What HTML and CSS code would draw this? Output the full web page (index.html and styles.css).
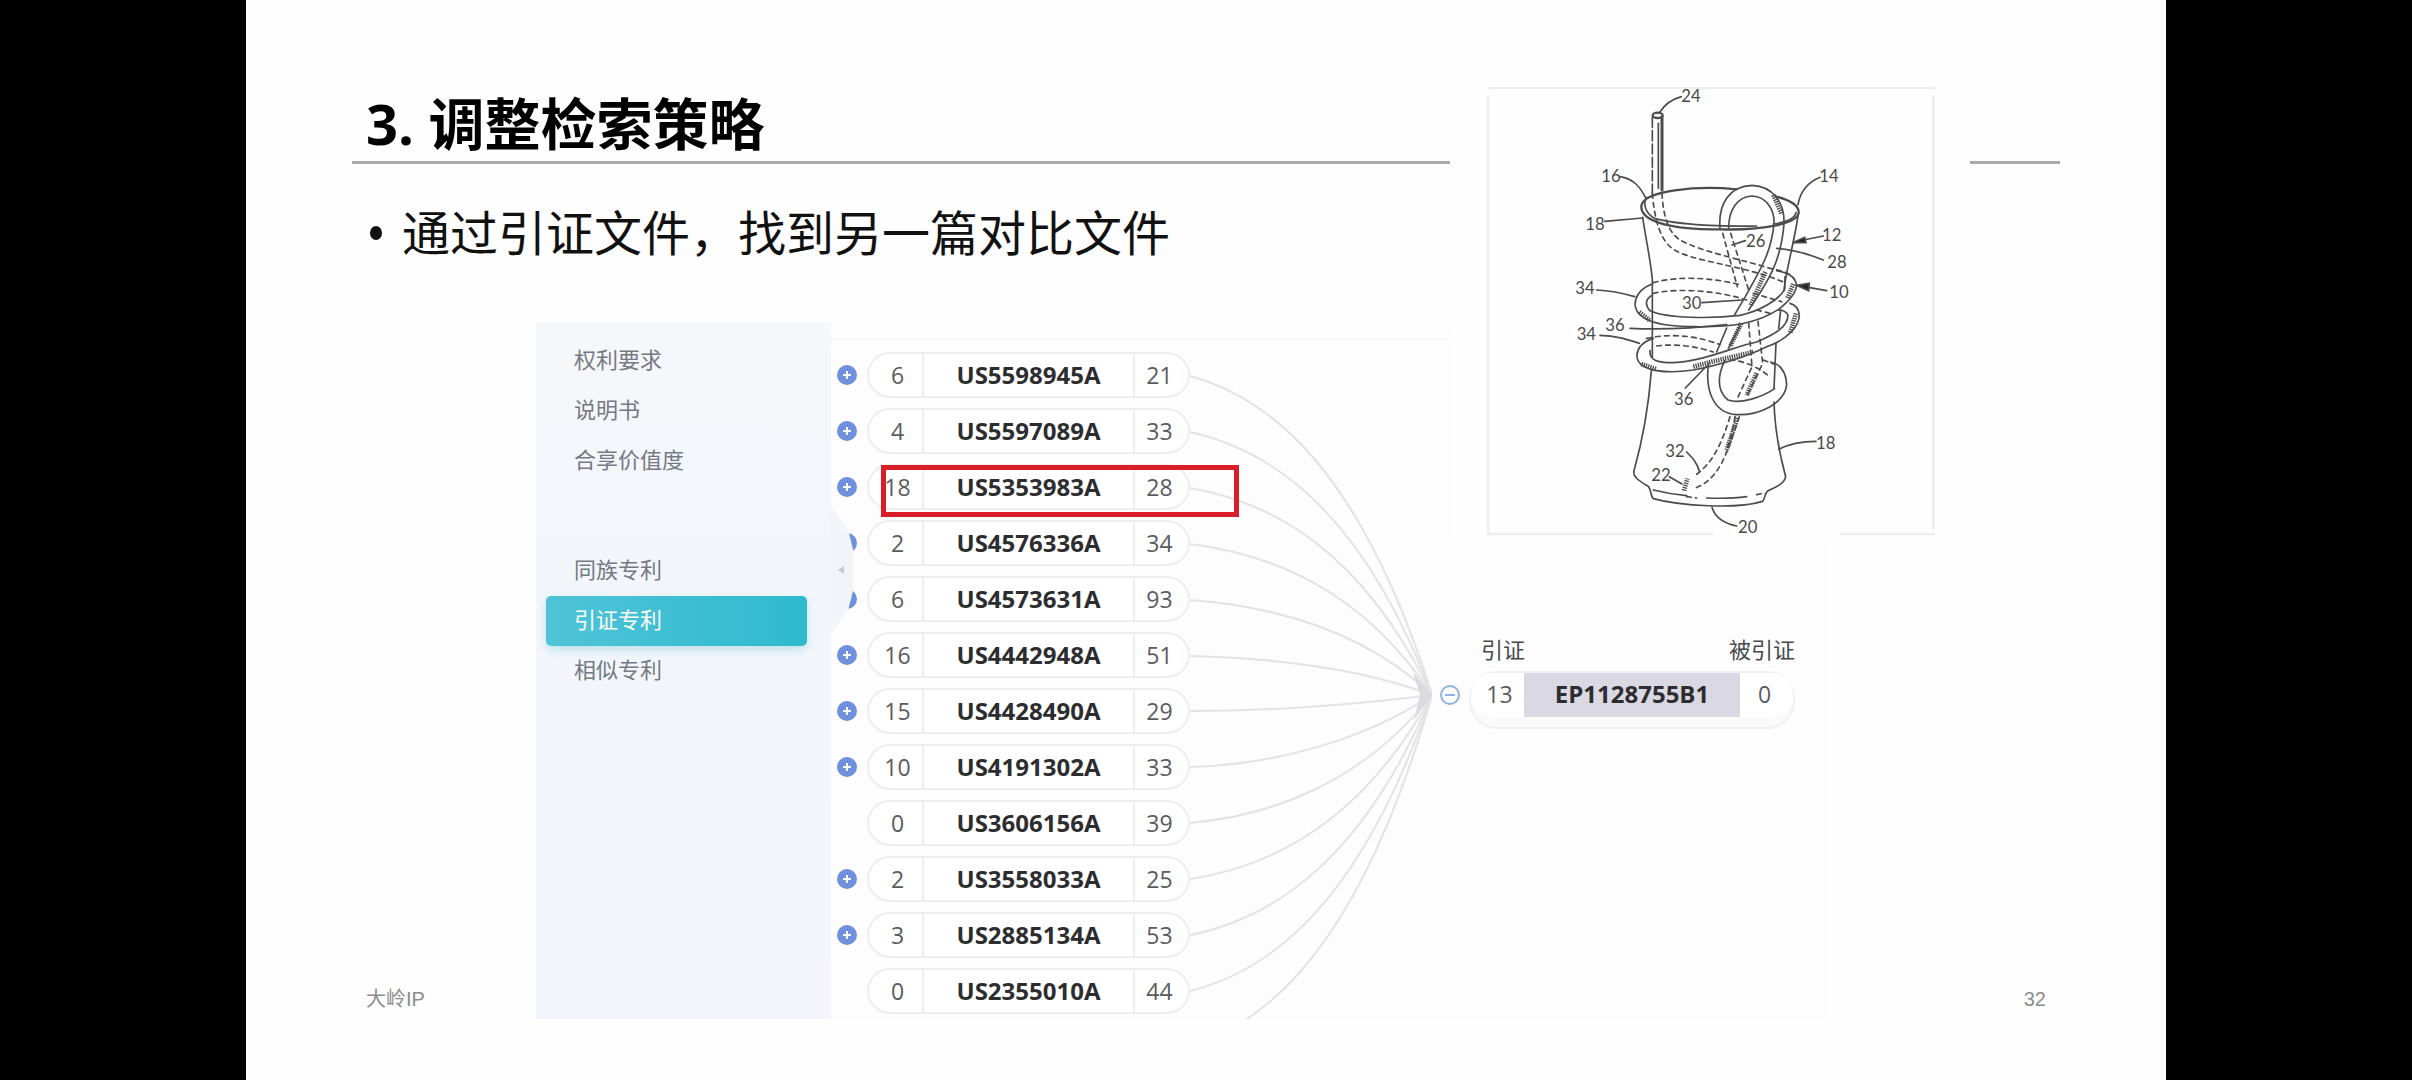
FILE: index.html
```html
<!DOCTYPE html>
<html lang="zh-CN">
<head>
<meta charset="utf-8">
<meta name="viewport" content="width=device-width, initial-scale=1">
<title>调整检索策略</title>
<link rel="stylesheet" href="styles.css">
</head>
<body>
<main class="slide">
  <h1 class="title">3. 调整检索策略</h1>
  <ul class="points">
    <li>通过引证文件，找到另一篇对比文件</li>
  </ul>

  <div class="body">
    <p class="note">大岭IP</p>

    <section class="panel">
      <nav class="sidebar">
        <a href="#claims">权利要求</a>
        <a href="#description">说明书</a>
        <a href="#value">合享价值度</a>
        <a class="group" href="#family">同族专利</a>
        <a class="active" href="#citations">引证专利</a>
        <a href="#similar">相似专利</a>
        <button class="handle" type="button" aria-label="收起"></button>
      </nav>

      <ul class="citations">
        <li><button class="plus" type="button" aria-label="展开"></button><div class="pill"><span>6</span><b>US5598945A</b><span>21</span></div></li>
        <li><button class="plus" type="button" aria-label="展开"></button><div class="pill"><span>4</span><b>US5597089A</b><span>33</span></div></li>
        <li class="marked"><button class="plus" type="button" aria-label="展开"></button><div class="pill"><span>18</span><b>US5353983A</b><span>28</span></div></li>
        <li><button class="plus" type="button" aria-label="展开"></button><div class="pill"><span>2</span><b>US4576336A</b><span>34</span></div></li>
        <li><button class="plus" type="button" aria-label="展开"></button><div class="pill"><span>6</span><b>US4573631A</b><span>93</span></div></li>
        <li><button class="plus" type="button" aria-label="展开"></button><div class="pill"><span>16</span><b>US4442948A</b><span>51</span></div></li>
        <li><button class="plus" type="button" aria-label="展开"></button><div class="pill"><span>15</span><b>US4428490A</b><span>29</span></div></li>
        <li><button class="plus" type="button" aria-label="展开"></button><div class="pill"><span>10</span><b>US4191302A</b><span>33</span></div></li>
        <li><div class="pill"><span>0</span><b>US3606156A</b><span>39</span></div></li>
        <li><button class="plus" type="button" aria-label="展开"></button><div class="pill"><span>2</span><b>US3558033A</b><span>25</span></div></li>
        <li><button class="plus" type="button" aria-label="展开"></button><div class="pill"><span>3</span><b>US2885134A</b><span>53</span></div></li>
        <li><div class="pill"><span>0</span><b>US2355010A</b><span>44</span></div></li>
      </ul>

      <svg class="links" viewBox="0 0 242 697" aria-hidden="true">
        <path d="M0 54C80 76 171 147 242 373"/>
        <path d="M0 110C80 128 171 186 242 373"/>
        <path d="M0 166C80 180 171 226 242 373"/>
        <path d="M0 222C80 232 171 266 242 373"/>
        <path d="M0 278C80 284 171 306 242 373"/>
        <path d="M0 334C80 336 171 346 242 373"/>
        <path d="M0 389C80 389 150 384 242 373"/>
        <path d="M0 445C80 443 171 420 242 373"/>
        <path d="M0 501C80 494 171 462 242 373"/>
        <path d="M0 557C80 545 171 502 242 373"/>
        <path d="M0 613C80 597 171 542 242 373"/>
        <path d="M0 669C80 649 171 582 242 373"/>
        <path d="M0 725C80 699 171 622 242 373"/>
        <path class="tip" d="M223 350L242 373L224 398L230 373Z"/>
      </svg>

      <div class="target">
        <button class="minus" type="button" aria-label="收起"></button>
        <div class="target-card">
          <div class="labels"><span>引证</span><span>被引证</span></div>
          <div class="target-shell"><div class="target-pill"><span>13</span><b>EP1128755B1</b><span>0</span></div></div>
        </div>
      </div>
    </section>

    <p class="note page">32</p>
  </div>

  <figure class="drawing">
    <svg viewBox="0 0 1410 1380" role="img" aria-label="带吸管的杯子">
      <g class="frame">
        <path d="M22 24H1366M24 46V1362M1360 46V1350M22 1362H700M1080 1362H1366"/>
      </g>
      <g class="ink">
        <!-- straw above the rim -->
        <path class="broken" d="M517 112V340"/>
        <path class="shade" d="M546 110V330"/>
        <path d="M535 130V325"/>
        <ellipse class="rim" cx="533" cy="106" rx="15" ry="8"/>
        <!-- cup rim and walls -->
        <path class="rim" d="M770 328C650 316 490 332 484 378C480 440 640 450 720 448C850 452 960 430 956 395C954 372 920 358 890 350"/>
        <path d="M500 352C488 372 496 400 525 416C600 436 740 440 830 438M880 432C920 426 945 414 948 398"/>
        <path d="M488 412C498 480 512 540 517 600V832M514 872C506 980 488 1080 462 1172C456 1192 484 1206 506 1220C514 1232 512 1250 520 1256C600 1278 770 1288 848 1264C858 1252 852 1242 862 1234C884 1222 914 1212 917 1190C898 1120 884 1040 882 966"/>
        <path d="M954 408C940 500 918 570 912 632M902 690L896 745M888 790L882 925"/>
        <path d="M520 1230C560 1240 590 1244 620 1247M680 1254C730 1256 770 1254 800 1250"/>
        <!-- hidden portions of the straw -->
        <g class="hidden">
          <path d="M517 340C524 420 540 480 580 508C640 546 790 555 910 606"/>
          <path d="M546 340C550 420 570 460 600 480C660 514 790 540 870 565C910 572 935 582 944 600"/>
          <path d="M728 460L772 620M752 460L806 630M520 608C600 586 700 594 780 614M520 640C600 622 720 634 800 660"/>
          <path d="M500 775C580 758 660 770 720 794M530 798C590 790 650 800 700 816"/>
          <path d="M806 730L816 860L770 960M834 724L848 850L800 950M750 840C790 840 850 870 870 892M850 840L880 852"/>
          <path d="M750 1010C725 1090 700 1150 640 1190M778 1010C740 1120 720 1200 640 1226M765 1010C758 1060 742 1100 738 1120"/>
          <path d="M820 640L905 665M830 690L870 700M620 1250L650 1254M830 1244L850 1240"/>
        </g>
        <!-- loops of the straw -->
        <path d="M720 446C714 370 750 318 816 316C880 318 914 370 912 430C904 540 868 600 806 690M780 738L745 806"/>
        <path d="M746 444C746 390 772 350 816 348C860 350 884 390 882 430C874 520 840 570 796 650L764 704M740 744L710 816"/>
        <path d="M517 612C480 624 462 654 466 680C474 720 530 738 640 740C760 742 830 730 896 688C940 654 960 620 944 600C936 584 910 576 890 572"/>
        <path d="M517 646C496 656 494 676 510 692C560 716 700 716 780 706C840 694 896 660 914 628L915 590"/>
        <path d="M520 775C486 786 466 808 472 836C484 874 560 882 640 870C740 850 800 830 860 800C920 780 958 740 958 704C956 686 944 674 930 670"/>
        <path d="M510 812C508 840 530 848 580 848C680 842 760 800 830 786C890 760 922 740 924 706C920 696 908 690 894 690"/>
        <path d="M686 850C674 930 700 1000 770 1004C840 1006 914 970 920 914C918 876 900 852 872 846"/>
        <path d="M734 842C716 880 706 930 744 960C780 974 850 950 884 926"/>
        <!-- shading -->
        <path class="hatch" d="M880 345L904 400M856 576L812 676M784 730L750 800M940 612L922 656M948 700L930 760M640 860L700 844L820 816M484 852L530 868M478 696L510 722"/>
        <path class="hatch" d="M612 1232L622 1196M772 1014L740 1110M830 880L800 946"/>
        <!-- lead lines -->
        <path d="M540 96C556 70 575 58 604 50M420 290C460 296 480 320 496 352M374 424L488 414M1020 292C976 310 960 340 954 374M1030 468L970 480M890 505C950 510 990 524 1030 540M756 495L796 482M350 630C400 632 430 640 464 650M666 668L786 660M450 745C560 750 650 744 740 734M360 766C410 768 440 778 478 790M616 924L680 858M1040 632L985 622M896 1108C930 1090 970 1084 1008 1084M620 1116C640 1136 652 1150 658 1174M568 1190L606 1212M696 1282C706 1314 730 1330 770 1338"/>
        <path class="arrow" d="M938 488L974 472L978 488ZM950 616L988 610L986 632Z"/>
      </g>
      <g class="refs">
        <text x="604" y="66">24</text><text x="364" y="307">16</text><text x="1018" y="307">14</text>
        <text x="316" y="450">18</text><text x="1026" y="484">12</text><text x="798" y="502">26</text>
        <text x="1042" y="563">28</text><text x="286" y="643">34</text><text x="606" y="686">30</text>
        <text x="1048" y="655">10</text><text x="376" y="752">36</text><text x="290" y="780">34</text>
        <text x="582" y="974">36</text><text x="1008" y="1107">18</text><text x="556" y="1130">32</text>
        <text x="514" y="1203">22</text><text x="774" y="1358">20</text>
      </g>
    </svg>
  </figure>
</main>
</body>
</html>
```
FILE: styles.css
```css
*, *::before, *::after { box-sizing: border-box; }

body {
  margin: 0;
  background: #000;
  color: #111;
  font-family: "Open Sans", "Noto Sans CJK SC", sans-serif;
}

ul, p, figure { margin: 0; padding: 0; }
ul { list-style: none; }
a { color: inherit; text-decoration: none; }
button { padding: 0; border: 0; background: none; font: inherit; }

.slide {
  position: relative;
  min-height: 100vh;
  margin: 0 246px;
  padding-top: 85px;
  background: #fefefe;
}

.title {
  margin: 0 106px;
  padding-left: 14px;
  border-bottom: 3px solid #aaa;
  color: #000;
  font-size: 56px;
  font-weight: 700;
  line-height: 76px;
}

.points {
  margin: 33px 120px 53px;
  font-size: 48px;
  line-height: 72px;
}

.points li {
  display: flex;
  align-items: center;
  gap: 20px;
}

.points li::before {
  content: "";
  width: 12px;
  height: 14px;
  margin-left: 4px;
  border-radius: 50%;
  background: #111;
}

.body {
  display: grid;
  grid-template-columns: 170px 1fr 216px;
  align-items: end;
  padding: 0 120px;
}

.note {
  padding-bottom: 6px;
  color: #8c8c8c;
  font-family: "Liberation Sans", "Noto Sans CJK SC", sans-serif;
  font-size: 20px;
  line-height: 28px;
}

.page { text-align: right; }

.panel {
  display: grid;
  grid-template-columns: 295px 359px 242px 1fr;
  background: linear-gradient(#f5f6f6, #f5f6f6) 0 16px / 100% 2px no-repeat #fdfdfe;
  border-radius: 2px;
  font-size: 22px;
  overflow: hidden;
}

.sidebar {
  position: relative;
  display: flex;
  flex-direction: column;
  padding: 14px 24px 0 10px;
  background: linear-gradient(#f5f7fa, #f2f6fb 40%, #f4f5fc);
  color: #747982;
}

.sidebar a {
  padding: 0 28px 4px;
  line-height: 46px;
}

.sidebar .group { margin-top: 60px; }

.sidebar .active {
  border-radius: 5px;
  background: linear-gradient(90deg, #50c3d8, #2fbace);
  box-shadow: 0 4px 8px #bfe3ec;
  color: #fff;
}

.handle {
  position: absolute;
  top: 184px;
  left: 100%;
  z-index: 1;
  width: 22px;
  height: 128px;
  background: #f2f4f9;
  clip-path: polygon(0 0, 80% 20%, 100% 34%, 100% 66%, 80% 80%, 0 100%);
}

.handle::before {
  content: "";
  display: block;
  width: 8px;
  margin-left: 5px;
  border: 4px solid transparent;
  border-right: 6px solid #c8c9cd;
  border-left: 0;
}

.citations { padding-top: 25px; }

.citations li {
  position: relative;
  display: grid;
  grid-template-columns: 36px 1fr;
  align-items: center;
  height: 56px;
}

.citations .pill { grid-column: 2; }

/* Highlight box drawn over the cited document */
.marked::after {
  content: "";
  position: absolute;
  top: 6px;
  right: -49px;
  left: 50px;
  z-index: 2;
  height: 52px;
  border: 5px solid #d81f28;
}

.plus {
  width: 20px;
  height: 20px;
  margin-left: 6px;
  border-radius: 50%;
  background:
    linear-gradient(#fff, #fff) center / 8px 2px no-repeat,
    linear-gradient(#fff, #fff) center / 2px 8px no-repeat,
    #6f90dc;
}

.pill {
  display: grid;
  grid-template-columns: 53px 1fr 53px;
  height: 46px;
  border: 2px solid #eeeeef;
  border-radius: 23px;
  background: #fff;
  line-height: 42px;
  text-align: center;
}

.pill span, .target-pill span { color: #5b5b5e; font-size: 23px; }
.pill b, .target-pill b { color: #2d2d30; font-size: 24px; }
.pill b { border: solid #eeeeef; border-width: 0 2px; }
.pill span:first-child { padding-left: 4px; }
.pill span:last-child { padding-right: 4px; }

.links {
  width: 100%;
  height: 697px;
  fill: none;
  stroke: #e3e2e5;
  stroke-width: 2;
}

.links .tip { fill: #dadbdf; stroke: none; }

.target {
  display: flex;
  align-items: flex-start;
  gap: 9px;
  padding: 311px 0 0 8px;
}

.minus {
  width: 20px;
  height: 20px;
  margin-top: 52px;
  border: 2px solid #8fb3e0;
  border-radius: 50%;
  background: linear-gradient(#8fb3e0, #8fb3e0) center / 10px 2px no-repeat;
}

.target-card { width: 326px; }

.labels {
  display: flex;
  justify-content: space-between;
  padding-left: 12px;
  color: #47474d;
  line-height: 32px;
}

.target-shell {
  margin-top: 6px;
  padding-bottom: 10px;
  border: 2px solid #f0f0f2;
  border-radius: 28px;
  background: #fafafb;
}

.target-pill {
  display: grid;
  grid-template-columns: 53px 1fr 53px;
  height: 44px;
  border-radius: 22px;
  background: #fff;
  line-height: 42px;
  text-align: center;
}

.target-pill b { background: #d9d8e3; }
.target-pill span:first-child { padding-left: 4px; }
.target-pill span:last-child { padding-right: 4px; }

/* Patent drawing laid over the title rule and the panel */
.drawing {
  position: absolute;
  top: 60px;
  left: 1204px;
  padding: 20px 20px 0 30px;
  background: #fefefe;
}

.drawing svg { display: block; width: 470px; height: 460px; }
.frame { fill: none; stroke: #eee; stroke-width: 8; }
.ink { fill: none; stroke: #4c4c4c; stroke-width: 5; stroke-linecap: round; }
.ink .rim { stroke-width: 7; }
.ink .broken { stroke-dasharray: 30 10; }
.ink .shade { stroke-width: 9; }
.ink .hidden { stroke-dasharray: 14 13; }
.ink .hatch { stroke-width: 14; stroke-dasharray: 4 3; stroke-linecap: butt; }
.ink .arrow { fill: #222; }
.refs { fill: #484848; font: 50px Lato, sans-serif; }
```
